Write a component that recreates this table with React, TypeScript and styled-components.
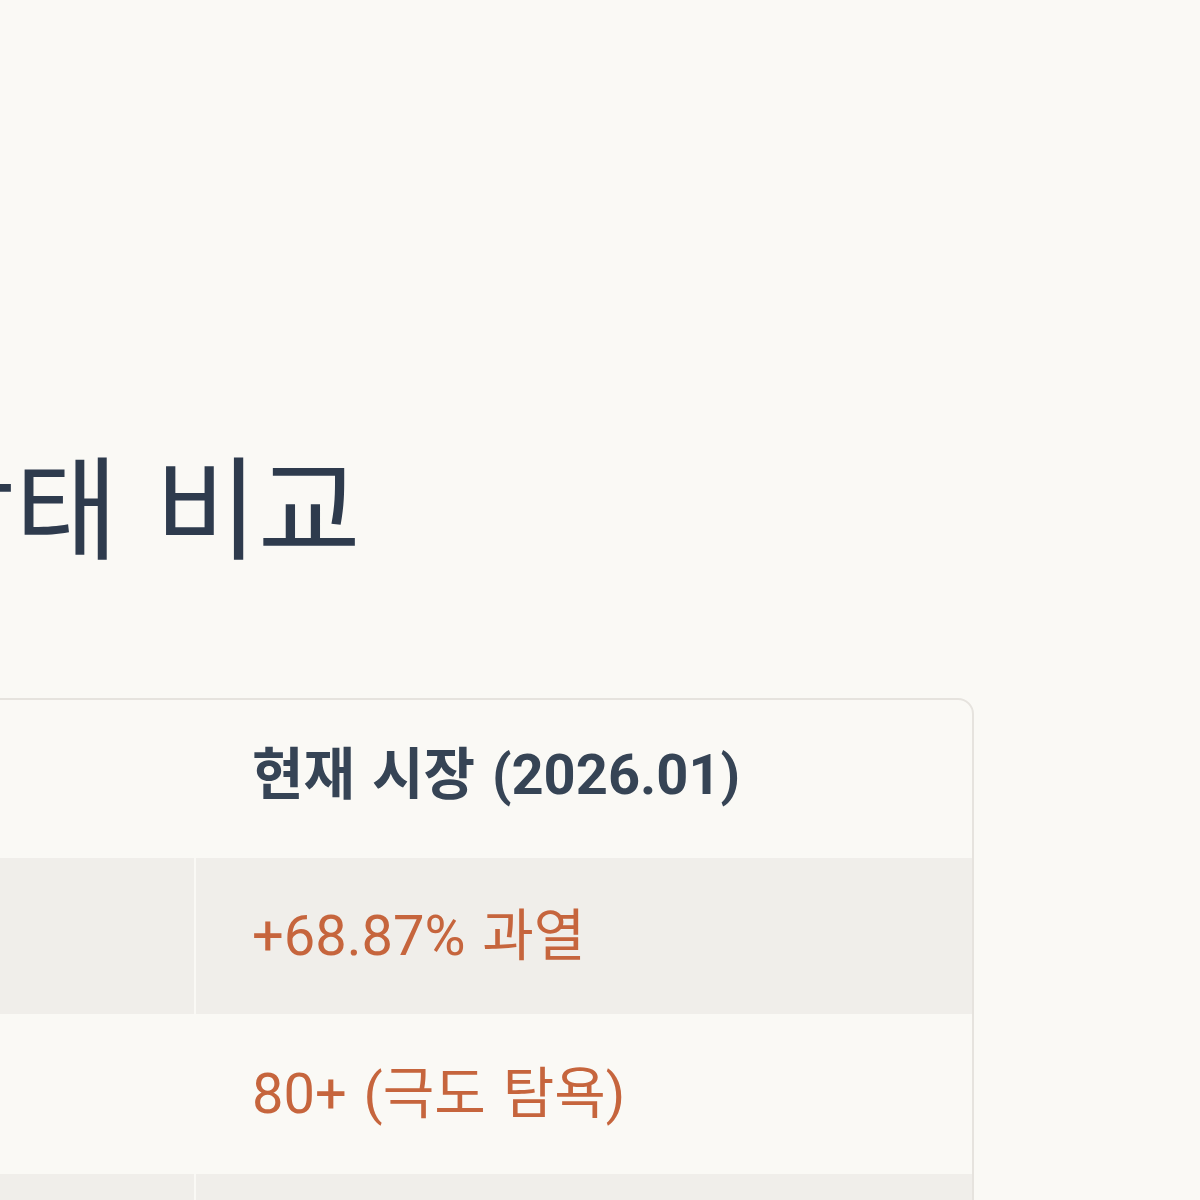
import React from 'react';
import styled, {createGlobalStyle} from 'styled-components';

const Global = createGlobalStyle`
    html, body {
        margin:0;
        padding:0;
        background-color:#faf9f5;
        overflow:hidden;
    }
    body {
        font-family:Roboto, "Noto Sans CJK KR", sans-serif;
    }
`;

const rows = [
    {label:'괴리율', value:'+68.87% 과열'},
    {label:'심리 지수', value:'80+ (극도 탐욕)'},
    {label:'밸류에이션', value:'역사적 고점 근접'},
];

const App = () => {
    return (
        <>
        <Global/>
        <Slide>
            <Content>
                <Title>시장 상태 비교</Title>
                <Card>
                    <HeadCell>지표</HeadCell>
                    <HeadCell>현재 시장 (2026.01)</HeadCell>
                    {rows.map((r,i)=>(
                        <React.Fragment key={r.label}>
                            <Cell $shade={i%2===0} $divider>{r.label}</Cell>
                            <Cell $shade={i%2===0} $accent>{r.value}</Cell>
                        </React.Fragment>
                    ))}
                </Card>
            </Content>
        </Slide>
        </>
    );
}

const Slide = styled.div`
    width:1200px;
    height:1200px;
    overflow:hidden;
`;

const Content = styled.div`
    margin-left:-347px;
    padding-top:446px;
`;

const Title = styled.h1`
    margin:0 0 118px 16px;
    font-size:112px;
    line-height:134px;
    font-weight:400;
    word-spacing:9px;
    color:#2e3b4d;
    white-space:nowrap;
`;

const Card = styled.div`
    display:grid;
    grid-template-columns:541px 776px;
    width:max-content;
    border:2px solid #e6e3de;
    border-radius:16px;
    overflow:hidden;
`;

const HeadCell = styled.div`
    padding:45px 56px 51px;
    font-size:56px;
    line-height:60px;
    font-weight:700;
    word-spacing:3px;
    color:#364455;
    white-space:nowrap;
`;

const Cell = styled.div<{$shade?:boolean;$divider?:boolean;$accent?:boolean}>`
    padding:48px 56px;
    font-size:56px;
    line-height:60px;
    word-spacing:3px;
    white-space:nowrap;
    background-color:${p=>p.$shade?'#f0eeea':'#faf9f5'};
    border-top:2px solid #faf9f5;
    border-right:${p=>p.$divider?'2px solid #faf9f5':'none'};
    color:${p=>p.$accent?'#c6653d':'#2e3b4d'};
`;

export default App;
